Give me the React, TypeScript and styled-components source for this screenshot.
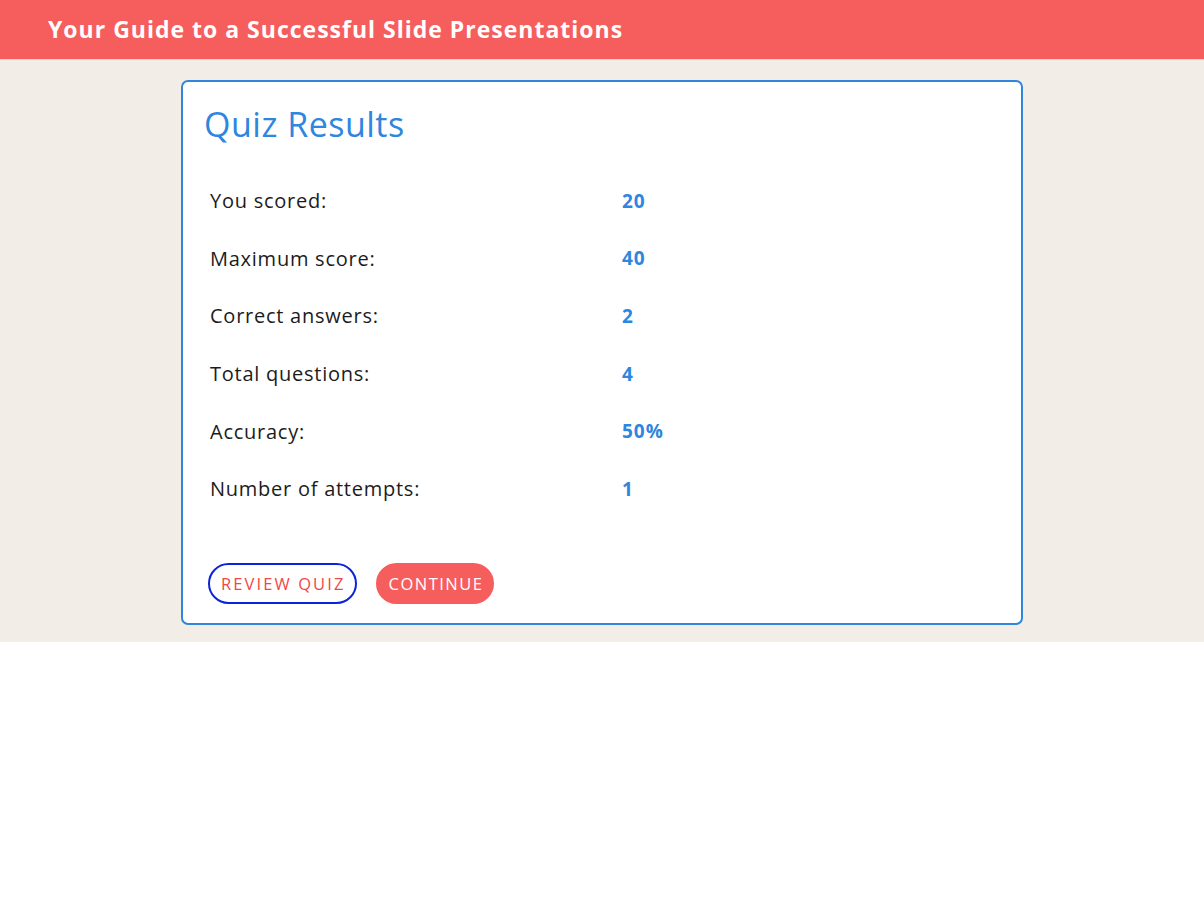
import styled, { createGlobalStyle } from "styled-components"

const GlobalStyle = createGlobalStyle`
  body {
    margin: 0;
    font-family: "Open Sans", "Noto Sans", sans-serif;
    background: #ffffff;
  }
`;

const Header = styled.header`
  height: 60px;
  background: #f65e5e;
  border-bottom: 1px solid #f3d2cc;
  box-sizing: border-box;
  display: flex;
  align-items: center;
  padding-left: 48px;
  padding-bottom: 1px;
`;

const HeaderTitle = styled.h1`
  margin: 0;
  color: #ffffff;
  font-size: 23px;
  font-weight: 700;
  letter-spacing: 1px;
`;

const Main = styled.main`
  background: #f2ede6;
  padding: 20px 0 17px;
`;

const Card = styled.section`
  width: 842px;
  box-sizing: border-box;
  margin: 0 auto;
  background: #ffffff;
  border: 2px solid #2f86dc;
  border-radius: 7px;
  padding: 20px 26px 19px 21px;
`;

const Title = styled.h2`
  margin: 0 0 26px;
  color: #2e86de;
  font-size: 34px;
  font-weight: 400;
  line-height: 44px;
  letter-spacing: 0.5px;
`;

const ResultTable = styled.div`
  display: grid;
  grid-template-columns: 412px 1fr;
  grid-auto-rows: 57.6px;
  padding-left: 6px;
  align-items: center;
`;

const Label = styled.div`
  font-size: 20px;
  letter-spacing: 0.75px;
  color: #1c1c1c;
`;

const Value = styled.div`
  font-size: 19px;
  font-weight: 700;
  letter-spacing: 1px;
  color: #2e86de;
`;

const Actions = styled.div`
  display: flex;
  gap: 19px;
  margin-top: 45px;
  padding-left: 4px;
`;

const PillButton = styled.button<{ $primary?: boolean }>`
  height: 41px;
  box-sizing: border-box;
  padding: 0 9px 0 11px;
  border-radius: 21px;
  font-family: inherit;
  font-size: 16.5px;
  letter-spacing: ${(p) => (p.$primary ? "1.5px" : "2.1px")};
  text-transform: uppercase;
  cursor: pointer;
  border: 2px solid ${(p) => (p.$primary ? "#f65e5e" : "#0a24d8")};
  background: ${(p) => (p.$primary ? "#f65e5e" : "#ffffff")};
  color: ${(p) => (p.$primary ? "#ffffff" : "#f04848")};
`;

const results = [
  { label: "You scored:", value: "20" },
  { label: "Maximum score:", value: "40" },
  { label: "Correct answers:", value: "2" },
  { label: "Total questions:", value: "4" },
  { label: "Accuracy:", value: "50%" },
  { label: "Number of attempts:", value: "1" },
]

const App = () => {
  return (
    <>
      <GlobalStyle />
      <Header>
        <HeaderTitle>Your Guide to a Successful Slide Presentations</HeaderTitle>
      </Header>
      <Main>
        <Card>
          <Title>Quiz Results</Title>
          <ResultTable>
            {results.map((r) => [
              <Label key={r.label}>{r.label}</Label>,
              <Value key={r.label + "-v"}>{r.value}</Value>,
            ])}
          </ResultTable>
          <Actions>
            <PillButton>Review Quiz</PillButton>
            <PillButton $primary>Continue</PillButton>
          </Actions>
        </Card>
      </Main>
    </>
  )
}

export default App
